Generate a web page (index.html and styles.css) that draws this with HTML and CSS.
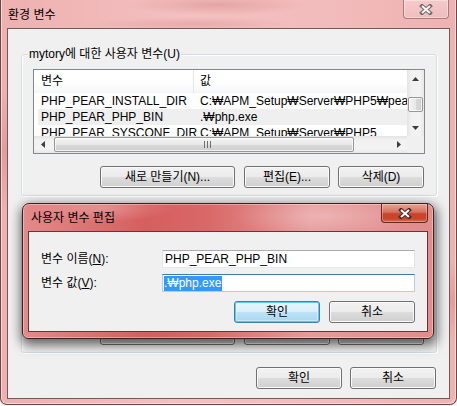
FILE: index.html
```html
<!DOCTYPE html>
<html lang="ko">
<head>
<meta charset="utf-8">
<title>환경 변수</title>
<link rel="stylesheet" href="styles.css">
</head>
<body>
<div class="window">
  <div class="titlebar">
    <span class="title">환경 변수</span>
    <div class="close close-inactive">
      <svg width="14" height="11" viewBox="0 0 14 11"><path d="M3 2 L11 9 M11 2 L3 9" stroke="#5a5a5a" stroke-width="4" stroke-linecap="square" fill="none"/><path d="M3 2 L11 9 M11 2 L3 9" stroke="#ffffff" stroke-width="2" fill="none"/></svg>
    </div>
  </div>
  <div class="client">
    <div class="groupbox">
      <div class="legend">mytory에 대한 사용자 변수(U)</div>
      <div class="listview">
        <div class="lv-content">
          <div class="lv-header">
            <div class="c1">변수</div>
            <div class="c2">값</div>
          </div>
          <div class="lv-row">
            <div class="c1">PHP_PEAR_INSTALL_DIR</div>
            <div class="c2">C:₩APM_Setup₩Server₩PHP5₩pear</div>
          </div>
          <div class="lv-row sel">
            <div class="c1">PHP_PEAR_PHP_BIN</div>
            <div class="c2">.₩php.exe</div>
          </div>
          <div class="lv-row">
            <div class="c1">PHP_PEAR_SYSCONF_DIR</div>
            <div class="c2">C:₩APM_Setup₩Server₩PHP5</div>
          </div>
        </div>
        <div class="vscroll">
          <div class="sb-btn"><svg width="7" height="4" viewBox="0 0 7 4"><path d="M0 4 L3.5 0 L7 4Z" fill="#3c3c3c"/></svg></div>
          <div class="sb-gap"></div>
          <div class="v-thumb"></div>
          <div class="sb-fill"></div>
          <div class="sb-btn"><svg width="7" height="4" viewBox="0 0 7 4"><path d="M0 0 L7 0 L3.5 4Z" fill="#3c3c3c"/></svg></div>
        </div>
        <div class="hscroll">
          <div class="sb-btn"><svg width="4" height="7" viewBox="0 0 4 7"><path d="M4 0 L4 7 L0 3.5Z" fill="#3c3c3c"/></svg></div>
          <div class="h-thumb">
            <svg width="7" height="7" viewBox="0 0 7 7"><path d="M0.5 0 V7 M3.5 0 V7 M6.5 0 V7" stroke="#6f6f6f" stroke-width="1"/></svg>
          </div>
          <div class="sb-fill"></div>
          <div class="sb-btn"><svg width="4" height="7" viewBox="0 0 4 7"><path d="M0 0 L0 7 L4 3.5Z" fill="#3c3c3c"/></svg></div>
        </div>
        <div class="sb-corner"></div>
      </div>
      <div class="btnrow">
        <button class="btn btn-wide">새로 만들기(N)...</button>
        <button class="btn">편집(E)...</button>
        <button class="btn">삭제(D)</button>
      </div>
    </div>

    <!-- system variables group: covered by the edit dialog, only its bottom edge shows -->
    <div class="groupbox groupbox2">
      <div class="legend legend-hidden"></div>
      <div class="listview">
        <div class="lv-content"></div>
        <div class="vscroll"></div>
        <div class="hscroll"></div>
        <div class="sb-corner"></div>
      </div>
      <div class="btnrow">
        <button class="btn btn-wide"></button>
        <button class="btn"></button>
        <button class="btn"></button>
      </div>
    </div>

    <div class="mainbtns">
      <button class="btn">확인</button>
      <button class="btn">취소</button>
    </div>
  </div>
</div>

<div class="dialog">
  <div class="dlg-titlebar">
    <span class="dlg-title">사용자 변수 편집</span>
    <div class="close close-active">
      <svg width="14" height="11" viewBox="0 0 14 11"><path d="M3 2 L11 9 M11 2 L3 9" stroke="#4a2a2a" stroke-width="4" stroke-linecap="square" fill="none"/><path d="M3 2 L11 9 M11 2 L3 9" stroke="#ffffff" stroke-width="2" fill="none"/></svg>
    </div>
  </div>
  <div class="dlg-client">
    <div class="form">
      <label class="lbl">변수 이름(<u>N</u>):</label>
      <div class="field">PHP_PEAR_PHP_BIN</div>
      <label class="lbl">변수 값(<u>V</u>):</label>
      <div class="field focused"><span class="selected">.₩php.exe</span></div>
    </div>
    <div class="dlg-btns">
      <button class="btn btn-default">확인</button>
      <button class="btn">취소</button>
    </div>
  </div>
</div>
</body>
</html>
```

FILE: styles.css
```css
* { box-sizing: border-box; }
html, body { margin: 0; padding: 0; }
body {
  width: 457px;
  height: 406px;
  overflow: hidden;
  position: relative;
  background: #f6f6f6;
  font-family: "Liberation Sans", "Noto Sans CJK KR", sans-serif;
  font-size: 12px;
  line-height: 14px;
  color: #000;
}

/* ---------- outer window ---------- */
.window {
  width: 457px;
  height: 405px;
  border: 1px solid #6a4848;
  border-top: none;
  border-radius: 0 0 7px 7px;
  padding: 0 6px 5px;
  display: flex;
  flex-direction: column;
  background:
    radial-gradient(ellipse 90px 10px at 215px 5px, rgba(190, 95, 95, 0.28), transparent),
    radial-gradient(ellipse 100px 7px at 190px 24px, rgba(190, 95, 95, 0.22), transparent),
    radial-gradient(ellipse 40px 60px at 4px 150px, rgba(190, 95, 95, 0.25), transparent),
    radial-gradient(ellipse 40px 40px at 452px 300px, rgba(190, 95, 95, 0.25), transparent),
    linear-gradient(90deg, #eeb0b0, #f4c0c0 40%, #f3bcbc 70%, #eeb2b2);
  box-shadow: inset 1px 0 0 rgba(255,255,255,0.5), inset -1px -1px 0 rgba(255,255,255,0.5);
}
.titlebar {
  height: 28px;
  flex: none;
  display: flex;
  justify-content: space-between;
  align-items: flex-start;
}
.title {
  padding: 8px 0 0 1px;
  line-height: 14px;
  color: #000;
}
.close {
  width: 46px;
  height: 19px;
  margin-right: 1px;
  border: 1px solid rgba(110, 60, 60, 0.55);
  border-top: none;
  border-radius: 0 0 4px 4px;
  display: flex;
  align-items: center;
  justify-content: center;
}
.close-inactive {
  background: linear-gradient(rgba(255,255,255,0.3), rgba(255,255,255,0.12));
  box-shadow: inset 0 0 0 1px rgba(255,255,255,0.35);
}
.close-inactive svg { opacity: 0.85; }

.client {
  flex: 1;
  border: 1px solid #755858;
  background: #f0f0f0;
  padding: 0 12px 0 13px;
  display: flex;
  flex-direction: column;
}

/* ---------- group boxes ---------- */
.groupbox {
  margin-top: 25px;
  border: 1px solid #d5dfe5;
  border-radius: 3px;
  box-shadow: inset 1px 1px 0 #fff, 1px 1px 0 #fff;
  padding: 0 0 7px;
}
.groupbox2 { margin-top: 15px; }
.legend {
  margin: -8px 0 0 6px;
  padding: 0 1px;
  width: fit-content;
  background: #f0f0f0;
  line-height: 14px;
}
.legend-hidden { height: 14px; width: 80px; }

.listview {
  margin: 8px 11px 0;
  height: 85px;
  border: 1px solid #828790;
  background: #fff;
  display: grid;
  grid-template-columns: 1fr 17px;
  grid-template-rows: 1fr 17px;
}
.lv-content { overflow: hidden; }
.lv-header {
  height: 23px;
  display: flex;
  line-height: 23px;
  background: linear-gradient(#ffffff 0%, #ffffff 55%, #f4f5f7 100%);
}
.lv-header .c1 {
  width: 160px;
  padding-left: 7px;
  border-right: 1px solid #e3e6ea;
}
.lv-header .c2 { padding-left: 6px; }
.lv-row {
  height: 16px;
  line-height: 16px;
  display: flex;
  white-space: nowrap;
}
.lv-row .c1 { width: 160px; flex: none; padding-left: 7px; }
.lv-row .c2 { padding-left: 6px; }
.lv-row.sel {
  background: linear-gradient(90deg, #fff 0, #fff 4px, #efefef 4px);
}

/* scrollbars */
.vscroll {
  display: flex;
  flex-direction: column;
  background: linear-gradient(90deg, #e4e4e4, #f1f1f1 25%, #f3f3f3 75%, #e8e8e8);
}
.hscroll {
  display: flex;
  background: linear-gradient(#e4e4e4, #f1f1f1 25%, #f3f3f3 75%, #e8e8e8);
}
.sb-btn {
  width: 17px;
  height: 17px;
  flex: none;
  display: flex;
  align-items: center;
  justify-content: center;
}
.sb-btn svg { display: block; }
.sb-gap { height: 10px; flex: none; }
.sb-fill { flex: 1; }
.v-thumb {
  height: 15px;
  margin: 0 1px;
  flex: none;
  border: 1px solid #989898;
  border-radius: 2px;
  background: linear-gradient(90deg, #f4f4f4, #e8e8e8 50%, #d9d9d9 50%, #d0d0d0);
  box-shadow: inset 0 0 0 1px rgba(255,255,255,0.7);
}
.h-thumb {
  width: 300px;
  margin: 1px 0 1px 3px;
  flex: none;
  border: 1px solid #989898;
  border-radius: 2px;
  background: linear-gradient(#f4f4f4, #e8e8e8 50%, #d9d9d9 50%, #d0d0d0);
  box-shadow: inset 0 0 0 1px rgba(255,255,255,0.7);
  display: flex;
  align-items: center;
  justify-content: center;
}
.h-thumb svg { display: block; margin-left: 6px; }
.sb-corner { background: #f0f0f0; }

/* ---------- buttons ---------- */
.btnrow {
  margin-top: 12px;
  padding-right: 12px;
  display: flex;
  justify-content: flex-end;
  gap: 8px;
}
.btn {
  width: 86px;
  height: 22px;
  padding: 0;
  border: 1px solid #707070;
  border-radius: 3px;
  background: linear-gradient(#f2f2f2 0%, #ebebeb 50%, #dddddd 50%, #cfcfcf 100%);
  box-shadow: inset 0 0 0 1px #fbfbfb;
  font-family: inherit;
  font-size: 12px;
  line-height: 20px;
  color: #000;
  text-align: center;
}
.btn-wide { width: 135px; margin-right: 1px; }
.btn-default {
  border-color: #3c7fb1;
  background: linear-gradient(#e9f5fc 0%, #d9eefa 50%, #bfe3f7 50%, #a9d6f0 100%);
  box-shadow: inset 0 0 0 1px #5fc8f2, inset 0 0 0 2px rgba(255,255,255,0.35);
}
.mainbtns {
  margin-top: 14px;
  padding-right: 1px;
  display: flex;
  justify-content: flex-end;
  gap: 8px;
}

/* ---------- edit dialog (floating window) ---------- */
.dialog {
  position: absolute;
  left: 22px;
  top: 203px;
  width: 412px;
  height: 136px;
  border: 1px solid #3e2020;
  border-radius: 7px 7px 6px 6px;
  padding: 0 5px 6px;
  display: flex;
  flex-direction: column;
  background:
    radial-gradient(ellipse 70px 14px at 80px 4px, rgba(255,255,255,0.25), transparent),
    radial-gradient(ellipse 90px 20px at 300px 12px, rgba(255,255,255,0.25), transparent),
    linear-gradient(90deg, #e38a8a 0%, #d65e5e 30%, #d96868 45%, #e79a9a 70%, #e28c8c 100%);
  box-shadow: inset 0 0 0 1px rgba(255,255,255,0.35), 1px 4px 12px 2px rgba(0,0,0,0.6);
}
.dlg-titlebar {
  height: 27px;
  flex: none;
  display: flex;
  justify-content: space-between;
  align-items: flex-start;
}
.dlg-title {
  padding: 7px 0 0 3px;
  line-height: 14px;
}
.close-active {
  width: 47px;
  margin-right: 0;
  border-color: #5e2a22;
  background: linear-gradient(#e8a394 0%, #d7725f 45%, #c7432c 55%, #c9442b 80%, #d86a4f 100%);
  box-shadow: inset 0 0 0 1px rgba(255,255,255,0.3);
}
.dlg-client {
  flex: 1;
  border: 1px solid #5f3838;
  background: #f0f0f0;
  padding: 18px 12px 8px;
  display: flex;
  flex-direction: column;
}
.form {
  display: grid;
  grid-template-columns: 121px 1fr;
  row-gap: 6px;
  align-items: center;
}
.lbl { line-height: 18px; }
.lbl u { text-decoration: underline; }
.field {
  height: 18px;
  border: 1px solid #e2e3ea;
  border-top-color: #abadb3;
  border-bottom-color: #e3e9ef;
  background: #fff;
  padding: 0 0 0 2px;
  line-height: 16px;
  white-space: nowrap;
}
.field.focused {
  border-color: #b5cfe7;
  border-top-color: #3d7bad;
}
.selected {
  display: inline-block;
  background: #3399ff;
  color: #fff;
  line-height: 15px;
  padding-right: 1px;
  margin-left: -1px;
}
.dlg-btns {
  margin-top: 9px;
  display: flex;
  justify-content: flex-end;
  gap: 9px;
}
```
